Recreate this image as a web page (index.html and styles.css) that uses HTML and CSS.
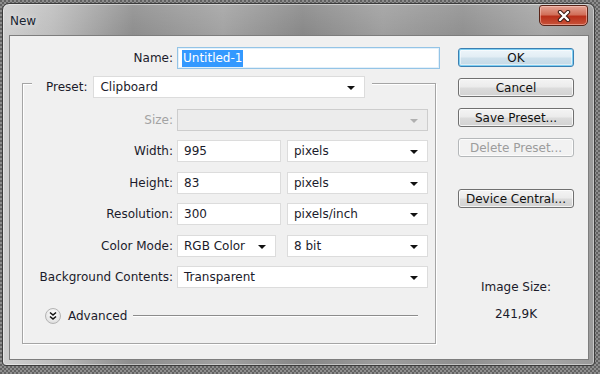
FILE: index.html
```html
<!DOCTYPE html>
<html>
<head>
<meta charset="utf-8">
<link rel="stylesheet" href="styles.css">
</head>
<body>
<div class="window">
  <div class="titlebar">
    <span class="title">New</span>
    <button class="close" aria-label="Close">
      <svg width="16" height="12" viewBox="0 0 16 12">
        <path d="M4 2 L12 10 M12 2 L4 10" stroke="#3a1a14" stroke-width="4.4" stroke-linecap="round"/>
        <path d="M4 2 L12 10 M12 2 L4 10" stroke="#ffffff" stroke-width="2.4" stroke-linecap="round"/>
      </svg>
    </button>
  </div>
  <div class="panel">
    <div class="form">
      <div class="name-row">
        <label class="lbl">Name:</label>
        <div class="field name-field"><span class="sel-text">Untitled-1</span></div>
      </div>
      <div class="group">
        <div class="group-head">
          <label class="lbl">Preset:</label>
          <div class="field dd w-preset">Clipboard<span class="arrow"></span></div>
        </div>
        <div class="rows">
          <label class="lbl disabled">Size:</label>
          <div class="field dd w-full dis"><span class="arrow grey"></span></div>

          <label class="lbl">Width:</label>
          <div class="pair">
            <div class="field w-num">995</div>
            <div class="field dd w-unit">pixels<span class="arrow"></span></div>
          </div>

          <label class="lbl">Height:</label>
          <div class="pair">
            <div class="field w-num">83</div>
            <div class="field dd w-unit">pixels<span class="arrow"></span></div>
          </div>

          <label class="lbl">Resolution:</label>
          <div class="pair">
            <div class="field w-num">300</div>
            <div class="field dd w-unit">pixels/inch<span class="arrow"></span></div>
          </div>

          <label class="lbl">Color Mode:</label>
          <div class="pair wide">
            <div class="field dd w-mode">RGB Color<span class="arrow"></span></div>
            <div class="field dd w-unit">8 bit<span class="arrow"></span></div>
          </div>

          <label class="lbl">Background Contents:</label>
          <div class="field dd w-full">Transparent<span class="arrow"></span></div>
        </div>
        <div class="advanced">
          <span class="adv-icon">
            <svg width="10" height="10" viewBox="0 0 10 10">
              <path d="M2 1.5 L5 4 L8 1.5 M2 5.5 L5 8 L8 5.5" fill="none" stroke="#111" stroke-width="1.6"/>
            </svg>
          </span>
          <span class="adv-text">Advanced</span>
          <span class="adv-line"></span>
        </div>
      </div>
    </div>
    <div class="side">
      <button class="btn ok">OK</button>
      <button class="btn">Cancel</button>
      <button class="btn">Save Preset...</button>
      <button class="btn off">Delete Preset...</button>
      <button class="btn device">Device Central...</button>
      <div class="imgsize">
        <div>Image Size:</div>
        <div class="val">241,9K</div>
      </div>
    </div>
  </div>
</div>
</body>
</html>
```

FILE: styles.css
```css
* { box-sizing: border-box; }
html, body { margin: 0; height: 100%; }
body {
  width: 600px;
  height: 374px;
  overflow: hidden;
  padding: 3px 5px 0 2px;
  background: repeating-conic-gradient(#8e8e8e 0 25%, #626262 0 50%) 0 0 / 4px 4px;
  font-family: "DejaVu Sans", Tahoma, sans-serif;
  font-size: 12px;
  color: #1b1b2b;
}
.window {
  width: 593px;
  height: 363px;
  border: 1px solid #3c3c3c;
  border-radius: 7px 7px 4px 4px;
  background:
    linear-gradient(180deg, rgba(255,255,255,0.12) 0, rgba(255,255,255,0) 32px),
    linear-gradient(90deg, #cfcfcf 0, #bdbdbd 50px, #8d8d8d 130px, #a2a2a2 220px, #878787 300px, #9e9e9e 380px, #8f8f8f 460px, #a6a6a6 540px, #9a9a9a 593px);
  box-shadow: inset 0 0 0 1px rgba(255,255,255,0.45);
  display: flex;
  flex-direction: column;
  padding: 0 5px 5px 6px;
}
.titlebar {
  height: 31px;
  display: flex;
  align-items: flex-start;
  justify-content: space-between;
}
.title {
  margin-top: 10px;
  margin-left: 1px;
  font-size: 12px;
  color: #1a2530;
  text-shadow: 0 0 6px rgba(255,255,255,0.7);
}
.close {
  margin-top: 1px;
  margin-right: 1px;
  width: 49px;
  height: 21px;
  border: 1px solid #5a2418;
  border-radius: 3px 3px 5px 5px;
  background: linear-gradient(180deg, #e4a394 0, #d2705a 45%, #b9301a 55%, #c8533a 100%);
  box-shadow: inset 0 0 0 1px rgba(255,210,200,0.5);
  display: flex;
  align-items: center;
  justify-content: center;
  padding: 0;
}
.panel {
  flex: 1;
  background: #f0f0f0;
  border: 1px solid #7d7d7d;
  display: flex;
}
.form {
  width: 448px;
  padding-top: 11px;
}
.lbl {
  text-align: right;
  white-space: nowrap;
  color: #1b1b2b;
  margin-right: -2px;
}
.lbl.disabled { color: #a3a3a3; }
.name-row {
  display: grid;
  grid-template-columns: 161px 263px;
  column-gap: 6px;
  align-items: center;
}
.field {
  height: 22px;
  background: #fff;
  border: 1px solid #dcdcdc;
  display: flex;
  align-items: center;
  padding-left: 6px;
  position: relative;
  white-space: nowrap;
}
.name-field {
  border-color: #94c4e6;
  box-shadow: inset 0 0 0 1px #e3f0fa;
  padding-left: 4px;
}
.sel-text {
  background: #3399ff;
  color: #fff;
  padding: 1px 1px 2px;
}
.group {
  margin: 14px 0 0 12px;
  width: 414px;
  border: 1px solid #a5a5a5;
  box-shadow: inset 1px 1px 0 #fff, 1px 1px 0 #fff;
  padding-bottom: 19px;
}
.group-head {
  margin: -8px 0 0 9px;
  width: fit-content;
  background: #f0f0f0;
  display: flex;
  align-items: center;
  gap: 6px;
  padding: 0 7px 0 14px;
}
.group-head .lbl { margin-right: 0; }
.dd { padding-right: 20px; }
.arrow {
  position: absolute;
  right: 9px;
  top: 9px;
  width: 0;
  height: 0;
  border-left: 4px solid transparent;
  border-right: 4px solid transparent;
  border-top: 4px solid #111;
}
.arrow.grey { border-top-color: #b0b0b0; }
.w-preset { width: 272px; }
.rows {
  margin-top: 11px;
  display: grid;
  grid-template-columns: 148px 251px;
  column-gap: 6px;
  row-gap: 9.4px;
  align-items: center;
}
.w-full { width: 251px; }
.field.dis {
  background: #ececec;
  border-color: #cdcdcd;
}
.pair {
  display: flex;
  gap: 6px;
}
.pair.wide { gap: 11px; }
.w-num { width: 104px; }
.w-unit { width: 141px; }
.w-mode { width: 99px; }
.advanced {
  margin-top: 20px;
  padding-left: 22px;
  padding-right: 17px;
  display: flex;
  align-items: center;
}
.adv-icon {
  width: 16px;
  height: 16px;
  border-radius: 50%;
  border: 1px solid #b4b4b4;
  background: radial-gradient(circle at 50% 35%, #ffffff 0, #e8e8e8 60%, #d2d2d2 100%);
  display: flex;
  align-items: center;
  justify-content: center;
}
.adv-text {
  margin-left: 7px;
  font-size: 12px;
}
.adv-line {
  flex: 1;
  margin-left: 6px;
  height: 1px;
  background: #8c8c8c;
  box-shadow: 0 1px 0 #fff;
}
.side {
  width: 116px;
  padding-top: 12px;
  display: flex;
  flex-direction: column;
  gap: 11px;
}
.btn {
  height: 19px;
  width: 116px;
  padding: 0;
  font-family: inherit;
  font-size: 12px;
  color: #111;
  border: 1px solid #707070;
  border-radius: 3px;
  background: linear-gradient(180deg, #f4f4f4 0, #ebebeb 48%, #dcdcdc 52%, #d2d2d2 100%);
  box-shadow: inset 0 0 0 1px rgba(255,255,255,0.75);
}
.btn.ok {
  border-color: #3c7fb1;
  box-shadow: inset 0 0 0 1px #7ed0f4, inset 0 0 0 2px rgba(255,255,255,0.5);
  background: linear-gradient(180deg, #eef6fb 0, #e2edf4 48%, #cfe1ec 52%, #c4d9e6 100%);
}
.btn.off {
  color: #9c9c9c;
  border-color: #b5b8ba;
  background: #f2f2f2;
}
.btn.device { margin-top: 21px; }
.imgsize {
  margin-top: 55px;
  text-align: center;
  font-size: 12px;
  line-height: 27px;
}
```
